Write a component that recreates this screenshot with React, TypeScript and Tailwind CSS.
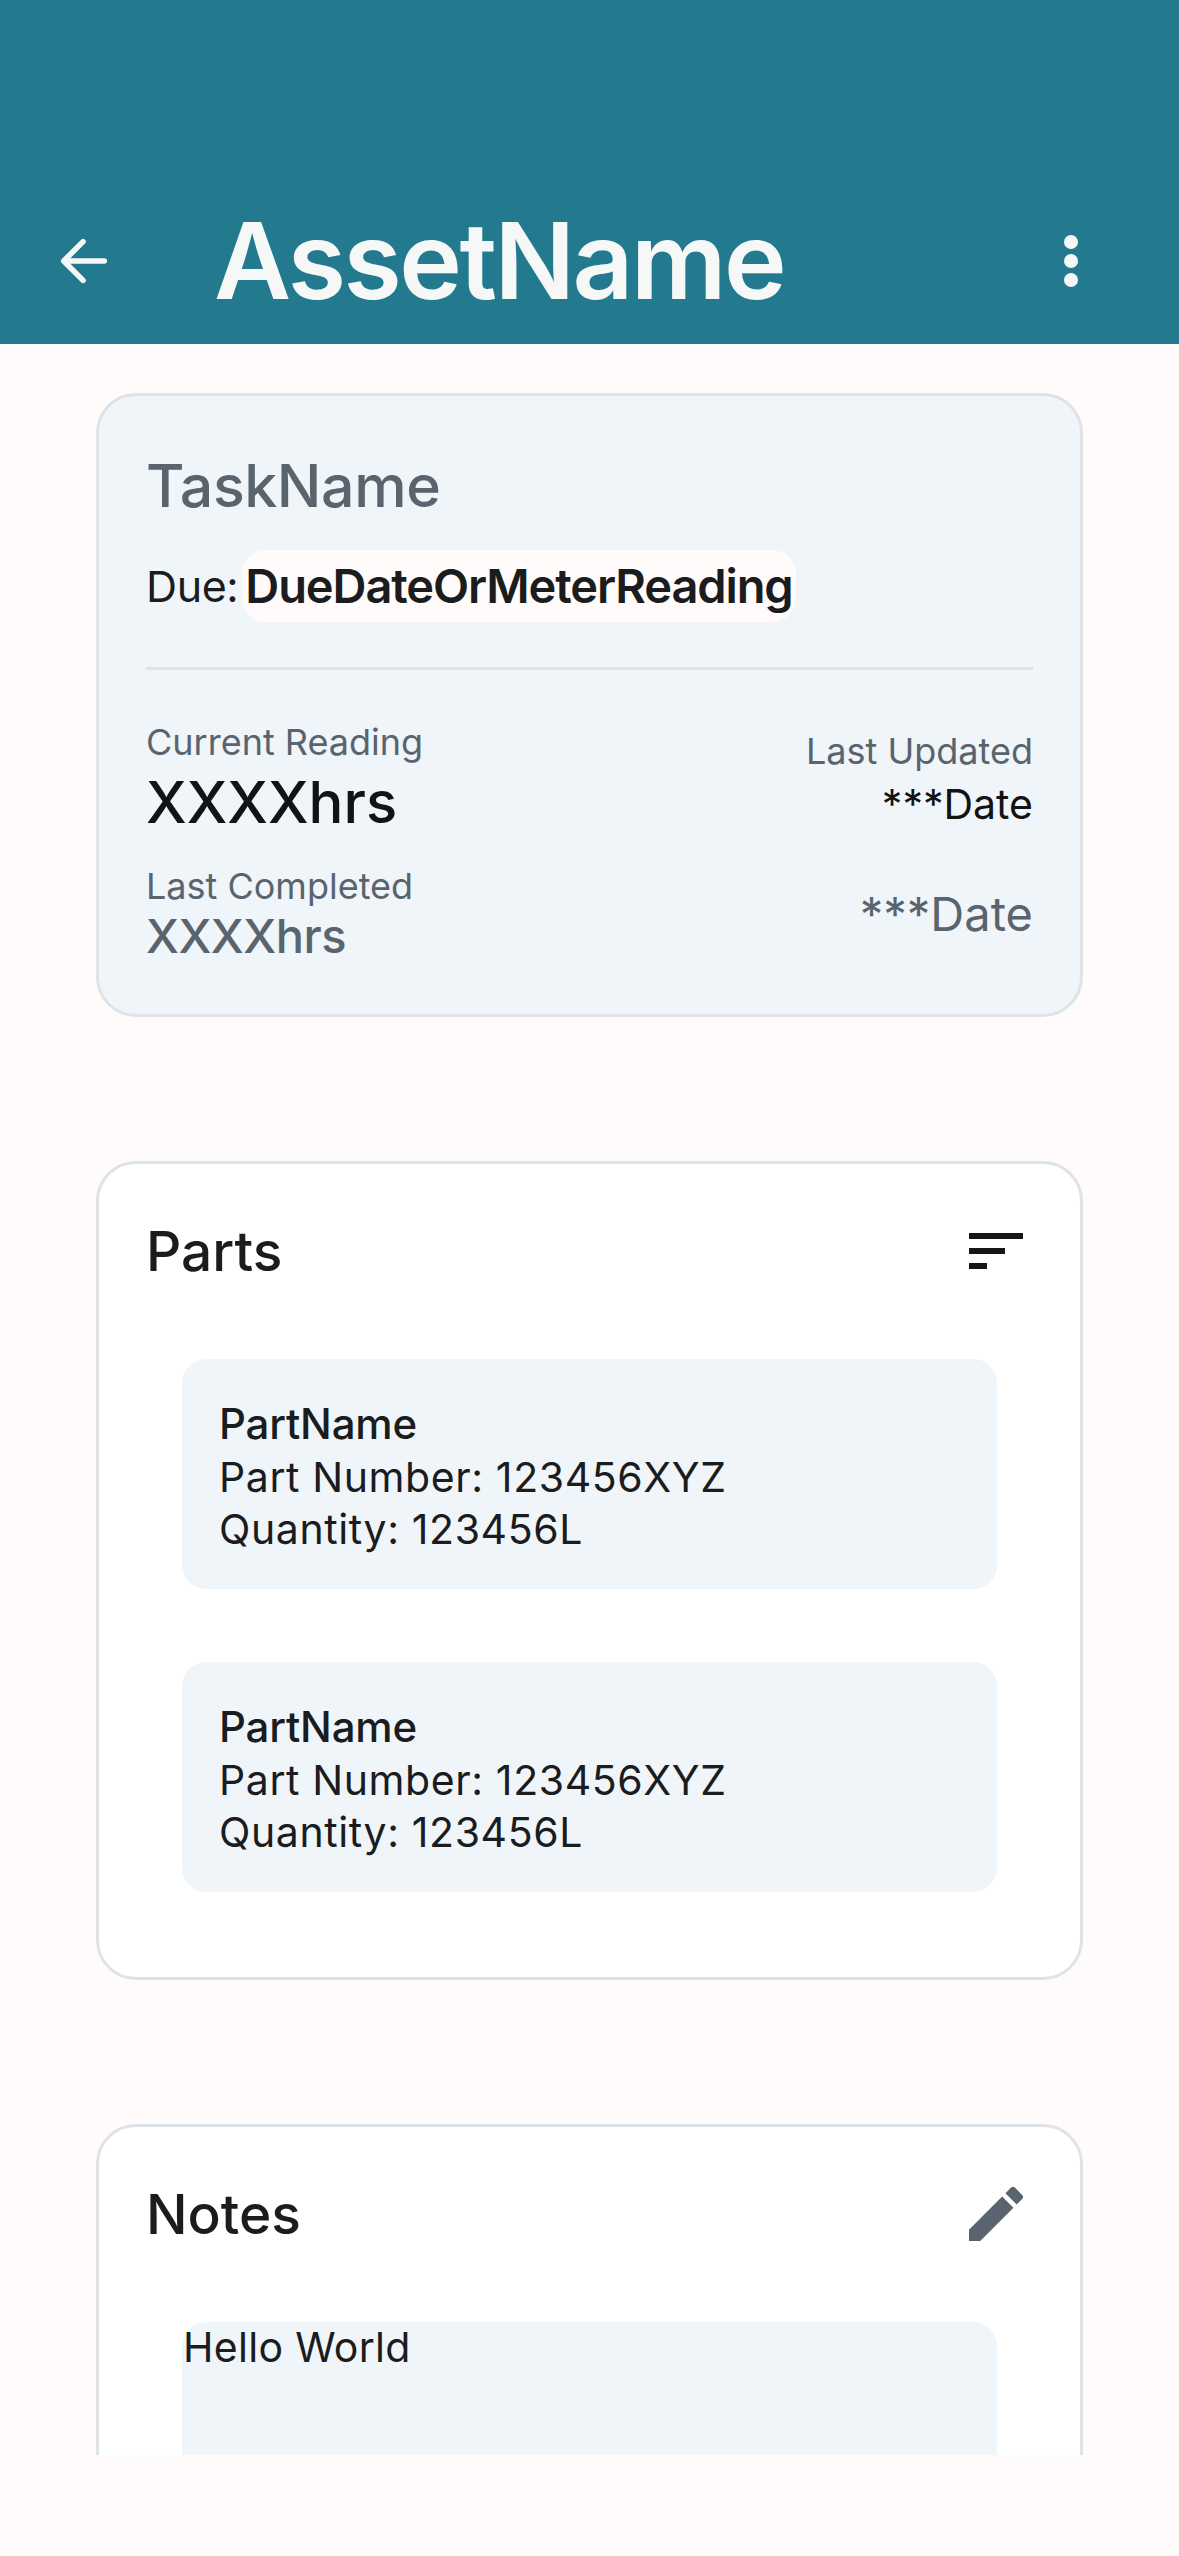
const FONT = "font-['Inter','Noto_Sans',sans-serif]";

function PartCard({ name, number, quantity }: { name: string; number: string; quantity: string }) {
  return (
    <div className="rounded-[24px] bg-[#f0f5f9] pl-[37px] pt-[38px] h-[230px] text-[#1a1c1e]">
      <div className="text-[42px] leading-[54px] font-medium tracking-[-0.2px]">{name}</div>
      <div className="text-[41px] leading-[52px] tracking-[0.6px]">{number}</div>
      <div className="text-[41px] leading-[52px] tracking-[0.6px]">{quantity}</div>
    </div>
  );
}

export default function App() {
  return (
    <div className={`${FONT} w-[1179px] h-[2556px] bg-[#fffbfa] overflow-hidden`}>
      <header className="h-[344px] bg-[#237a8f] flex items-end justify-between pb-[23px] pl-[60px] pr-[78px] text-[#f6f8f8]">
        <div className="flex items-center h-[120px]">
          <svg width="48" height="48" viewBox="0 0 52 52" fill="none" stroke="currentColor" strokeWidth="6" strokeLinecap="round" strokeLinejoin="round">
            <path d="M48 26H5M25 5 4 26l21 21" />
          </svg>
          <h1 className="ml-[106px] text-[106px] leading-[120px] font-semibold tracking-[-2.5px]">AssetName</h1>
        </div>
        <div className="h-[120px] w-[60px] flex items-center justify-center">
          <svg width="16" height="52" viewBox="0 0 16 52" fill="currentColor">
            <circle cx="8" cy="7" r="7" />
            <circle cx="8" cy="26" r="7" />
            <circle cx="8" cy="45" r="7" />
          </svg>
        </div>
      </header>

      <main className="h-[2111px] overflow-hidden px-[96px] pt-[49px] flex flex-col gap-[144px]">
        <section className="shrink-0 h-[624px] rounded-[40px] border-[3px] border-[#dfe3e8] bg-[#f0f5f9] px-[47px] pt-[56px]">
          <div className="text-[59px] leading-[68px] font-medium text-[#59646e] tracking-[-0.4px]">TaskName</div>
          <div className="mt-[30px] flex items-center">
            <span className="text-[43px] text-[#1a1c1e] tracking-[-0.4px]">Due:</span>
            <span className="ml-[4px] h-[72px] rounded-[24px] bg-[#fffbfa] px-[3px] flex items-center text-[47px] font-semibold tracking-[-1.1px] text-[#1a1c1e]">DueDateOrMeterReading</span>
          </div>
          <div className="mt-[45px] h-[3px] bg-[#dfe3e8]" />
          <div className="mt-[50px] flex justify-between">
            <div>
              <div className="text-[36px] leading-[44px] text-[#59646e]">Current Reading</div>
              <div className="mt-[6px] text-[58px] leading-[64px] font-medium text-[#111315]">XXXXhrs</div>
            </div>
            <div className="text-right pt-[8px]">
              <div className="text-[36px] leading-[46px] text-[#59646e]">Last Updated</div>
              <div className="mt-[5px] text-[41px] leading-[50px] text-[#111315]">***Date</div>
            </div>
          </div>
          <div className="mt-[30px] flex justify-between items-center">
            <div>
              <div className="text-[36px] leading-[44px] text-[#59646e]">Last Completed</div>
              <div className="text-[47px] leading-[56px] font-medium text-[#59646e] tracking-[-0.5px]">XXXXhrs</div>
            </div>
            <div className="text-[47px] leading-[60px] text-[#59646e]">***Date</div>
          </div>
        </section>

        <section className="shrink-0 h-[819px] rounded-[40px] border-[3px] border-[#dfe3e8] bg-white px-[47px] pt-[55px]">
          <div className="flex items-center justify-between h-[64px]">
            <span className="text-[55px] font-medium text-[#1a1c1e]">Parts</span>
            <svg className="mr-[10px]" width="54" height="36" viewBox="0 0 54 36" fill="#15181b">
              <rect x="0" y="0" width="54" height="6" />
              <rect x="0" y="15" width="36" height="6" />
              <rect x="0" y="30" width="18" height="6" />
            </svg>
          </div>
          <div className="mt-[76px] mx-[36px] flex flex-col gap-[73px]">
            <PartCard name="PartName" number="Part Number: 123456XYZ" quantity="Quantity: 123456L" />
            <PartCard name="PartName" number="Part Number: 123456XYZ" quantity="Quantity: 123456L" />
          </div>
        </section>

        <section className="shrink-0 h-[818px] rounded-[40px] border-[3px] border-[#dfe3e8] bg-white px-[47px] pt-[55px]">
          <div className="flex items-center justify-between h-[64px]">
            <span className="text-[55px] font-medium text-[#1a1c1e]">Notes</span>
            <svg className="mr-[10px]" width="54" height="54" viewBox="3 3 18 18" fill="#59646e">
              <path d="M3 17.25V21h3.75L17.81 9.94l-3.75-3.75L3 17.25zM20.71 7.04a1 1 0 0 0 0-1.41l-2.34-2.34a1 1 0 0 0-1.41 0l-1.83 1.83 3.75 3.75 1.83-1.83z" />
            </svg>
          </div>
          <div className="mt-[76px] mx-[36px] h-[400px] rounded-[24px] bg-[#f0f5f9] pl-[1px] text-[41px] leading-[50px] tracking-[0.3px] text-[#1a1c1e]">Hello World</div>
        </section>
      </main>
    </div>
  );
}
